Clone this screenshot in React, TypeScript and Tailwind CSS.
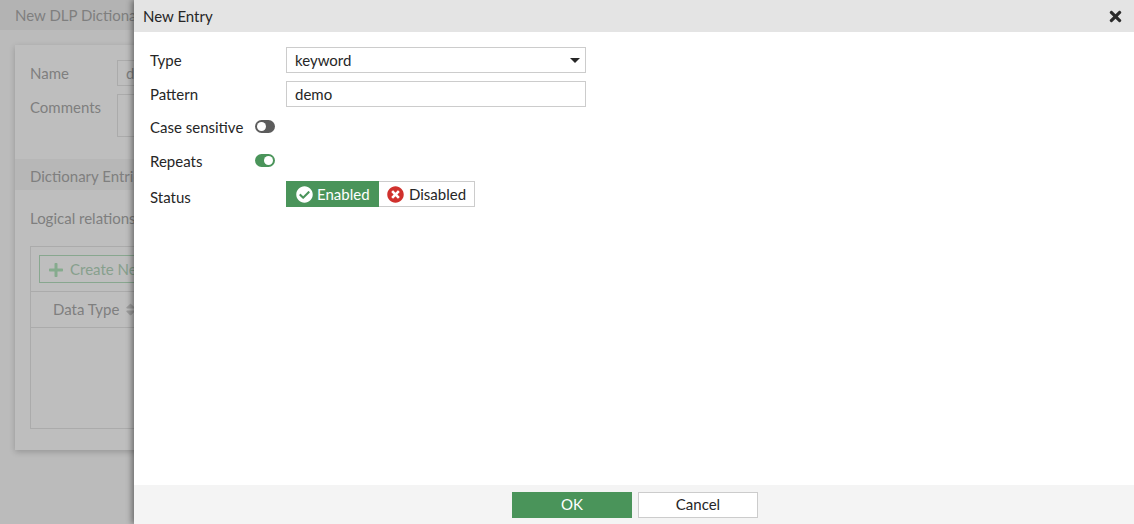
import { FaCheckCircle, FaPlus, FaSort, FaTimes, FaTimesCircle } from 'react-icons/fa'

const FONT = "font-['Lato','Open_Sans',sans-serif]"

function Toggle({ on }: { on: boolean }) {
  return (
    <span className={`flex h-[13px] w-5 items-center rounded-full px-[2px] ${on ? 'justify-end bg-[#4a945a]' : 'justify-start bg-[#5c5c5c]'}`}>
      <span className="h-[9px] w-[9px] rounded-full bg-white" />
    </span>
  )
}

// dimmed page behind the slide-in
function BackPage() {
  return (
    <div className="flex h-full flex-col bg-[#bbbbbb] text-[15px] text-[#7f7f7f]">
      <div className="flex h-[30px] items-center bg-[#b3b3b3] pl-[15px]">New DLP Dictionary</div>
      <div className="mx-[15px] mt-[15px] h-[405px] bg-[#bebebe] shadow-[0_2px_6px_rgba(0,0,0,0.2)]">
        <div className="flex pl-[15px] pt-[15px]">
          <span className="w-[87px] pt-[2px]">Name</span>
          <div className="h-[26px] flex-1 border border-[#ababab] px-2 leading-[24px]">d</div>
        </div>
        <div className="mt-2 flex pl-[15px]">
          <span className="w-[87px] pt-[2px]">Comments</span>
          <div className="h-[43px] flex-1 border border-[#ababab]" />
        </div>
        <div className="mt-[22px] flex h-[31px] items-center bg-[#b7b7b7] pl-[15px] pt-[3px]">Dictionary Entries</div>
        <div className="mt-[17px] h-[22px] pl-[15px] leading-[22px]">Logical relationship</div>
        <div className="ml-[15px] mt-[17px] h-[183px] border border-[#ababab]">
          <div className="border-b border-[#ababab] px-2 py-2">
            <div className="flex h-[28px] w-[200px] items-center gap-[6px] border border-[#88a78f] pl-[8px] pt-px text-[#87a08d]">
              <FaPlus className="text-[16px] text-[#86ab8e]" />
              Create New
            </div>
          </div>
          <div className="flex h-[36px] items-center gap-1 border-b border-[#ababab] pl-[22px]">
            Data Type
            <FaSort className="text-[15px] text-[#9c9c9c]" />
          </div>
        </div>
      </div>
    </div>
  )
}

export default function App() {
  return (
    <div className={`relative h-[524px] w-[1134px] overflow-hidden ${FONT}`}>
      <BackPage />

      <div className="absolute bottom-0 left-[134px] right-0 top-0 flex flex-col bg-white text-[15px] text-[#262626] shadow-[-2px_0_6px_rgba(0,0,0,0.45)]">
        <div className="flex h-8 shrink-0 items-center justify-between bg-[#e4e4e4] pl-[9px] pr-[10px]">
          <span className="pt-px">New Entry</span>
          <FaTimes className="text-[17px] text-[#2b2b2b]" />
        </div>

        <div className="flex flex-1 flex-col pl-4 pt-[15px]">
          <div className="flex h-[26px] items-center">
            <span className="w-[136px] pt-px">Type</span>
            <div className="flex h-[26px] w-[300px] items-center justify-between border border-[#cccccc] pl-2 pr-[5px] pt-px">
              keyword
              <span className="h-0 w-0 border-x-[5.5px] border-t-[5px] border-x-transparent border-t-[#262626]" />
            </div>
          </div>
          <div className="mt-2 flex h-[26px] items-center">
            <span className="w-[136px] pt-px">Pattern</span>
            <div className="flex h-[26px] w-[300px] items-center border border-[#cccccc] pl-2 pt-px">demo</div>
          </div>
          <div className="mt-2 flex h-[26px] items-center">
            <span className="-mt-0.5 w-[105px]">Case sensitive</span>
            <span className="-mt-[3px]"><Toggle on={false} /></span>
          </div>
          <div className="mt-2 flex h-[26px] items-center">
            <span className="-mt-0.5 w-[105px]">Repeats</span>
            <span className="-mt-[3px]"><Toggle on /></span>
          </div>
          <div className="mt-1.5 flex h-[26px] items-center">
            <span className="w-[136px] pt-[7px]">Status</span>
            <div className="flex h-[26px]">
              <div className="flex w-[93px] items-center gap-[4px] bg-[#4a945a] pl-[10px] text-white">
                <FaCheckCircle className="text-[17px]" />
                <span className="pt-px">Enabled</span>
              </div>
              <div className="flex w-[96px] items-center gap-[5px] border border-l-0 border-[#cccccc] pl-2">
                <FaTimesCircle className="text-[17px] text-[#d0312d]" />
                <span className="pt-px">Disabled</span>
              </div>
            </div>
          </div>
        </div>

        <div className="flex h-[39px] shrink-0 items-center justify-center gap-1.5 bg-[#f4f4f4] pl-[2px]">
          <div className="flex h-[26px] w-[120px] items-center justify-center bg-[#4a945a] text-white">OK</div>
          <div className="flex h-[26px] w-[120px] items-center justify-center border border-[#cccccc] bg-white">Cancel</div>
        </div>
      </div>
    </div>
  )
}
